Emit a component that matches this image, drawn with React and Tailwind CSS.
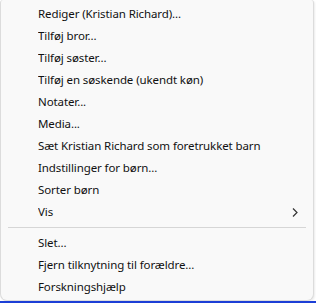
const topItems = [
  "Rediger (Kristian Richard)...",
  "Tilføj bror...",
  "Tilføj søster...",
  "Tilføj en søskende (ukendt køn)",
  "Notater...",
  "Media...",
  "Sæt Kristian Richard som foretrukket barn",
  "Indstillinger for børn...",
  "Sorter børn",
];

const bottomItems = ["Slet...", "Fjern tilknytning til forældre...", "Forskningshjælp"];

function MenuItem({ label, submenu }) {
  return (
    <div className="flex h-[22px] items-center pl-[37px] pr-[15px]">
      <span className="flex-1 truncate">{label}</span>
      {submenu && (
        <svg width="6" height="9" viewBox="0 0 6 9" className="text-[#333]">
          <path d="M1 0.5 L5 4.5 L1 8.5" fill="none" stroke="currentColor" strokeWidth="1.2" />
        </svg>
      )}
    </div>
  );
}

export default function App() {
  return (
    <div className="flex h-[303px] w-[316px] flex-col bg-white">
      <div
        className="mr-[2px] flex h-[301px] flex-col rounded-b-[7px] rounded-t-[3px] border border-t-0 border-[#dcdcdc] bg-[#f9f9f9] pt-[3px] text-[11.5px] tracking-[-0.1px] text-[#111] shadow-[1px_1px_2px_rgba(0,0,0,0.08)]"
        style={{ fontFamily: '"Segoe UI", "Noto Sans", sans-serif' }}
      >
        {topItems.map((item) => (
          <MenuItem key={item} label={item} />
        ))}
        <MenuItem label="Vis" submenu />
        <div className="mx-[7px] mt-[4px] mb-[4px] h-px bg-[#d6d6d6]" />
        {bottomItems.map((item) => (
          <MenuItem key={item} label={item} />
        ))}
      </div>
      <div className="h-[2px] bg-[#1c3fd6]" />
    </div>
  );
}
